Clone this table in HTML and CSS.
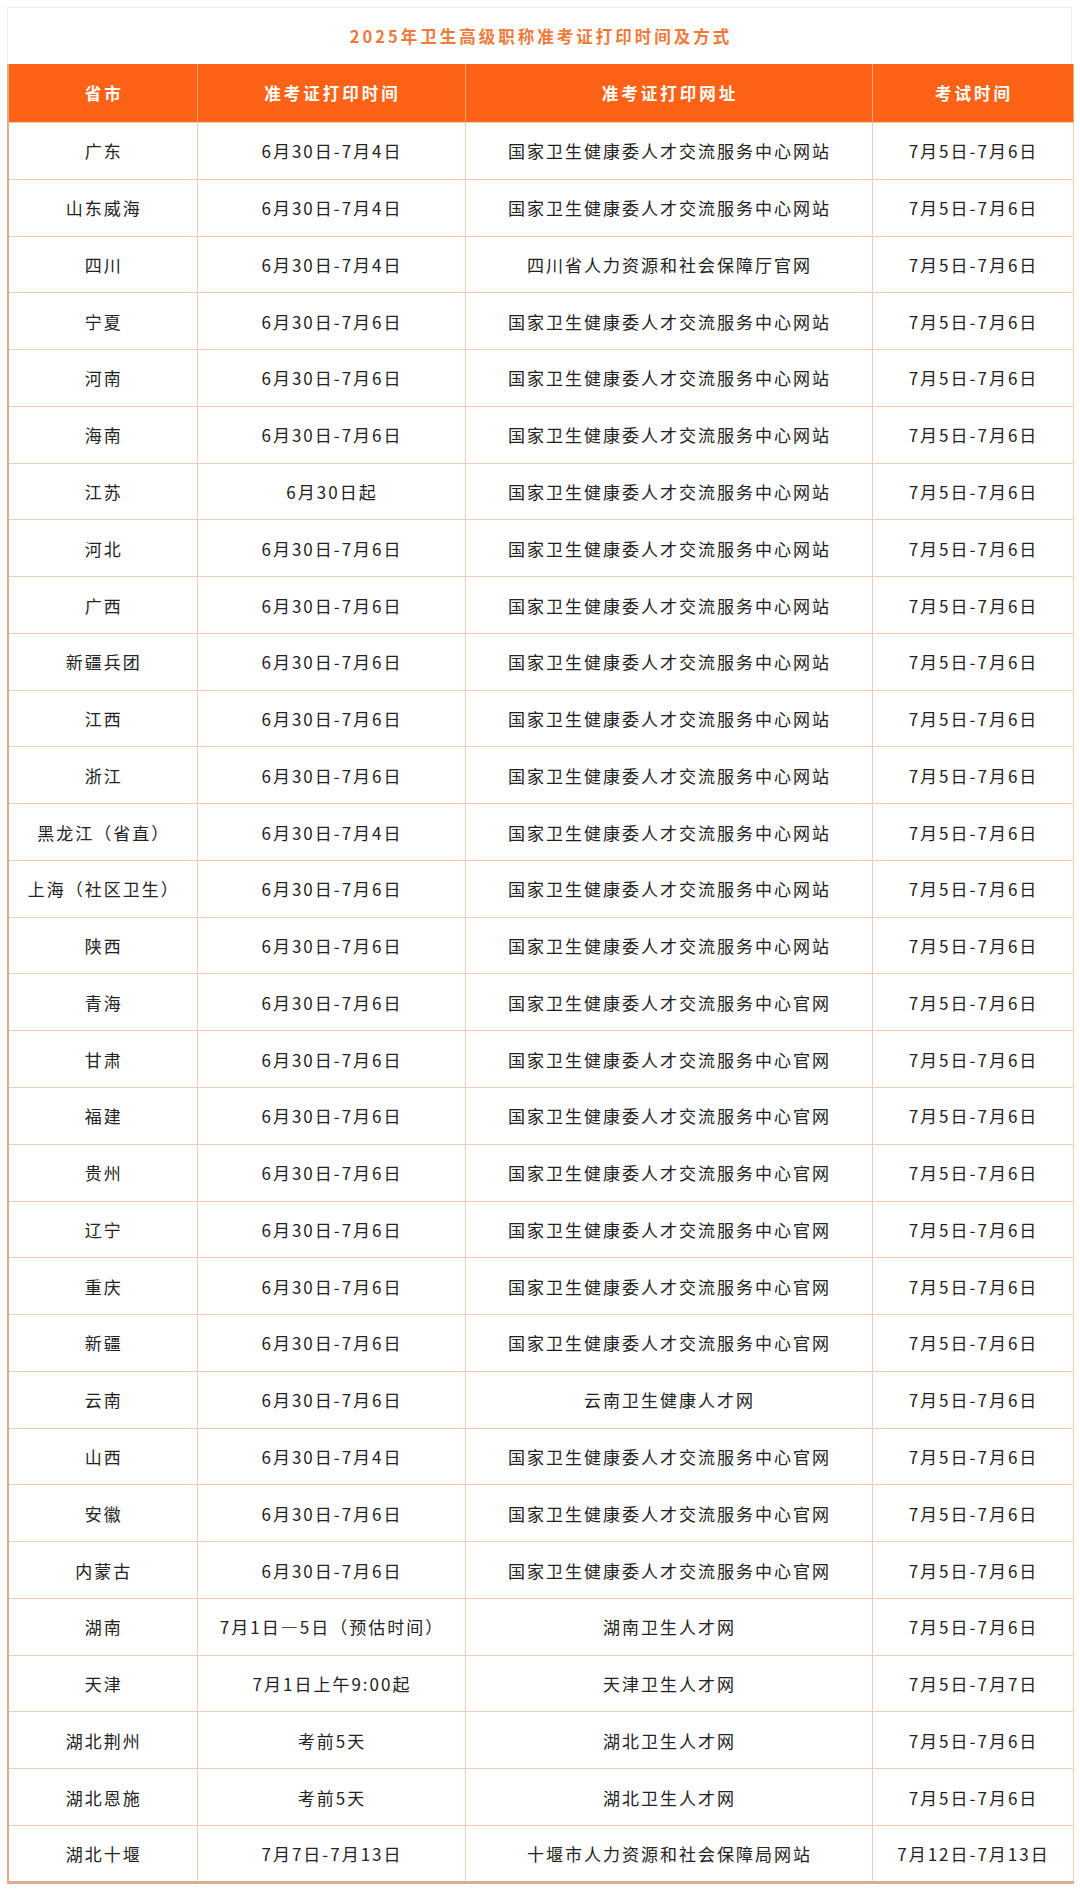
FILE: index.html
```html
<!DOCTYPE html>
<html lang="zh-CN">
<head>
<meta charset="utf-8">
<title>2025年卫生高级职称准考证打印时间及方式</title>
<link rel="stylesheet" href="styles.css">
</head>
<body>
<div class="card">
  <div class="title">2025年卫生高级职称准考证打印时间及方式</div>
  <table class="grid">
    <colgroup>
      <col class="c1"><col class="c2"><col class="c3"><col class="c4">
    </colgroup>
    <thead>
      <tr><th>省市</th><th>准考证打印时间</th><th>准考证打印网址</th><th>考试时间</th></tr>
    </thead>
    <tbody>
      <tr><td>广东</td><td>6月30日-7月4日</td><td>国家卫生健康委人才交流服务中心网站</td><td>7月5日-7月6日</td></tr>
      <tr><td>山东威海</td><td>6月30日-7月4日</td><td>国家卫生健康委人才交流服务中心网站</td><td>7月5日-7月6日</td></tr>
      <tr><td>四川</td><td>6月30日-7月4日</td><td>四川省人力资源和社会保障厅官网</td><td>7月5日-7月6日</td></tr>
      <tr><td>宁夏</td><td>6月30日-7月6日</td><td>国家卫生健康委人才交流服务中心网站</td><td>7月5日-7月6日</td></tr>
      <tr><td>河南</td><td>6月30日-7月6日</td><td>国家卫生健康委人才交流服务中心网站</td><td>7月5日-7月6日</td></tr>
      <tr><td>海南</td><td>6月30日-7月6日</td><td>国家卫生健康委人才交流服务中心网站</td><td>7月5日-7月6日</td></tr>
      <tr><td>江苏</td><td>6月30日起</td><td>国家卫生健康委人才交流服务中心网站</td><td>7月5日-7月6日</td></tr>
      <tr><td>河北</td><td>6月30日-7月6日</td><td>国家卫生健康委人才交流服务中心网站</td><td>7月5日-7月6日</td></tr>
      <tr><td>广西</td><td>6月30日-7月6日</td><td>国家卫生健康委人才交流服务中心网站</td><td>7月5日-7月6日</td></tr>
      <tr><td>新疆兵团</td><td>6月30日-7月6日</td><td>国家卫生健康委人才交流服务中心网站</td><td>7月5日-7月6日</td></tr>
      <tr><td>江西</td><td>6月30日-7月6日</td><td>国家卫生健康委人才交流服务中心网站</td><td>7月5日-7月6日</td></tr>
      <tr><td>浙江</td><td>6月30日-7月6日</td><td>国家卫生健康委人才交流服务中心网站</td><td>7月5日-7月6日</td></tr>
      <tr><td>黑龙江（省直）</td><td>6月30日-7月4日</td><td>国家卫生健康委人才交流服务中心网站</td><td>7月5日-7月6日</td></tr>
      <tr><td>上海（社区卫生）</td><td>6月30日-7月6日</td><td>国家卫生健康委人才交流服务中心网站</td><td>7月5日-7月6日</td></tr>
      <tr><td>陕西</td><td>6月30日-7月6日</td><td>国家卫生健康委人才交流服务中心网站</td><td>7月5日-7月6日</td></tr>
      <tr><td>青海</td><td>6月30日-7月6日</td><td>国家卫生健康委人才交流服务中心官网</td><td>7月5日-7月6日</td></tr>
      <tr><td>甘肃</td><td>6月30日-7月6日</td><td>国家卫生健康委人才交流服务中心官网</td><td>7月5日-7月6日</td></tr>
      <tr><td>福建</td><td>6月30日-7月6日</td><td>国家卫生健康委人才交流服务中心官网</td><td>7月5日-7月6日</td></tr>
      <tr><td>贵州</td><td>6月30日-7月6日</td><td>国家卫生健康委人才交流服务中心官网</td><td>7月5日-7月6日</td></tr>
      <tr><td>辽宁</td><td>6月30日-7月6日</td><td>国家卫生健康委人才交流服务中心官网</td><td>7月5日-7月6日</td></tr>
      <tr><td>重庆</td><td>6月30日-7月6日</td><td>国家卫生健康委人才交流服务中心官网</td><td>7月5日-7月6日</td></tr>
      <tr><td>新疆</td><td>6月30日-7月6日</td><td>国家卫生健康委人才交流服务中心官网</td><td>7月5日-7月6日</td></tr>
      <tr><td>云南</td><td>6月30日-7月6日</td><td>云南卫生健康人才网</td><td>7月5日-7月6日</td></tr>
      <tr><td>山西</td><td>6月30日-7月4日</td><td>国家卫生健康委人才交流服务中心官网</td><td>7月5日-7月6日</td></tr>
      <tr><td>安徽</td><td>6月30日-7月6日</td><td>国家卫生健康委人才交流服务中心官网</td><td>7月5日-7月6日</td></tr>
      <tr><td>内蒙古</td><td>6月30日-7月6日</td><td>国家卫生健康委人才交流服务中心官网</td><td>7月5日-7月6日</td></tr>
      <tr><td>湖南</td><td>7月1日—5日（预估时间）</td><td>湖南卫生人才网</td><td>7月5日-7月6日</td></tr>
      <tr><td>天津</td><td>7月1日上午9:00起</td><td>天津卫生人才网</td><td>7月5日-7月7日</td></tr>
      <tr><td>湖北荆州</td><td>考前5天</td><td>湖北卫生人才网</td><td>7月5日-7月6日</td></tr>
      <tr><td>湖北恩施</td><td>考前5天</td><td>湖北卫生人才网</td><td>7月5日-7月6日</td></tr>
      <tr><td>湖北十堰</td><td>7月7日-7月13日</td><td>十堰市人力资源和社会保障局网站</td><td>7月12日-7月13日</td></tr>
    </tbody>
  </table>
</div>
</body>
</html>
```
FILE: styles.css
```css
html, body {
  margin: 0;
  padding: 0;
  background: #ffffff;
}

body {
  font-family: "Noto Sans CJK SC", "Noto Sans", sans-serif;
  color: #222222;
}

.card {
  margin: 7px 0 0 7px;
  width: 1065px;
}

.title {
  box-sizing: border-box;
  height: 57px;
  border: 1px solid #ececec;
  border-bottom: none;
  display: flex;
  align-items: center;
  justify-content: center;
  padding-left: 3px;
  font-size: 16.5px;
  font-weight: 700;
  letter-spacing: 3px;
  color: #ef7a3a;
}

.grid {
  width: 1065px;
  table-layout: fixed;
  border-collapse: collapse;
  border-left: 2px solid #dcae8e;
  border-right: 1px solid #e6c2a8;
  border-bottom: 3px solid #dcae8e;
}

.c1 { width: 189px; }
.c2 { width: 268px; }
.c3 { width: 407px; }
.c4 { width: 201px; }

.grid th {
  height: 58px;
  padding: 0 0 0 3px;
  background: #fd6216;
  color: #ffffff;
  font-size: 16.5px;
  font-weight: 700;
  letter-spacing: 3px;
  text-align: center;
  border-left: 1px solid #f7a47a;
  border-right: 1px solid #f7a47a;
}

.grid td {
  height: 56.77px;
  padding: 0 0 0 2px;
  font-size: 17px;
  letter-spacing: 2px;
  text-align: center;
  border: 1px solid #f2cbb0;
  box-sizing: border-box;
}
```
